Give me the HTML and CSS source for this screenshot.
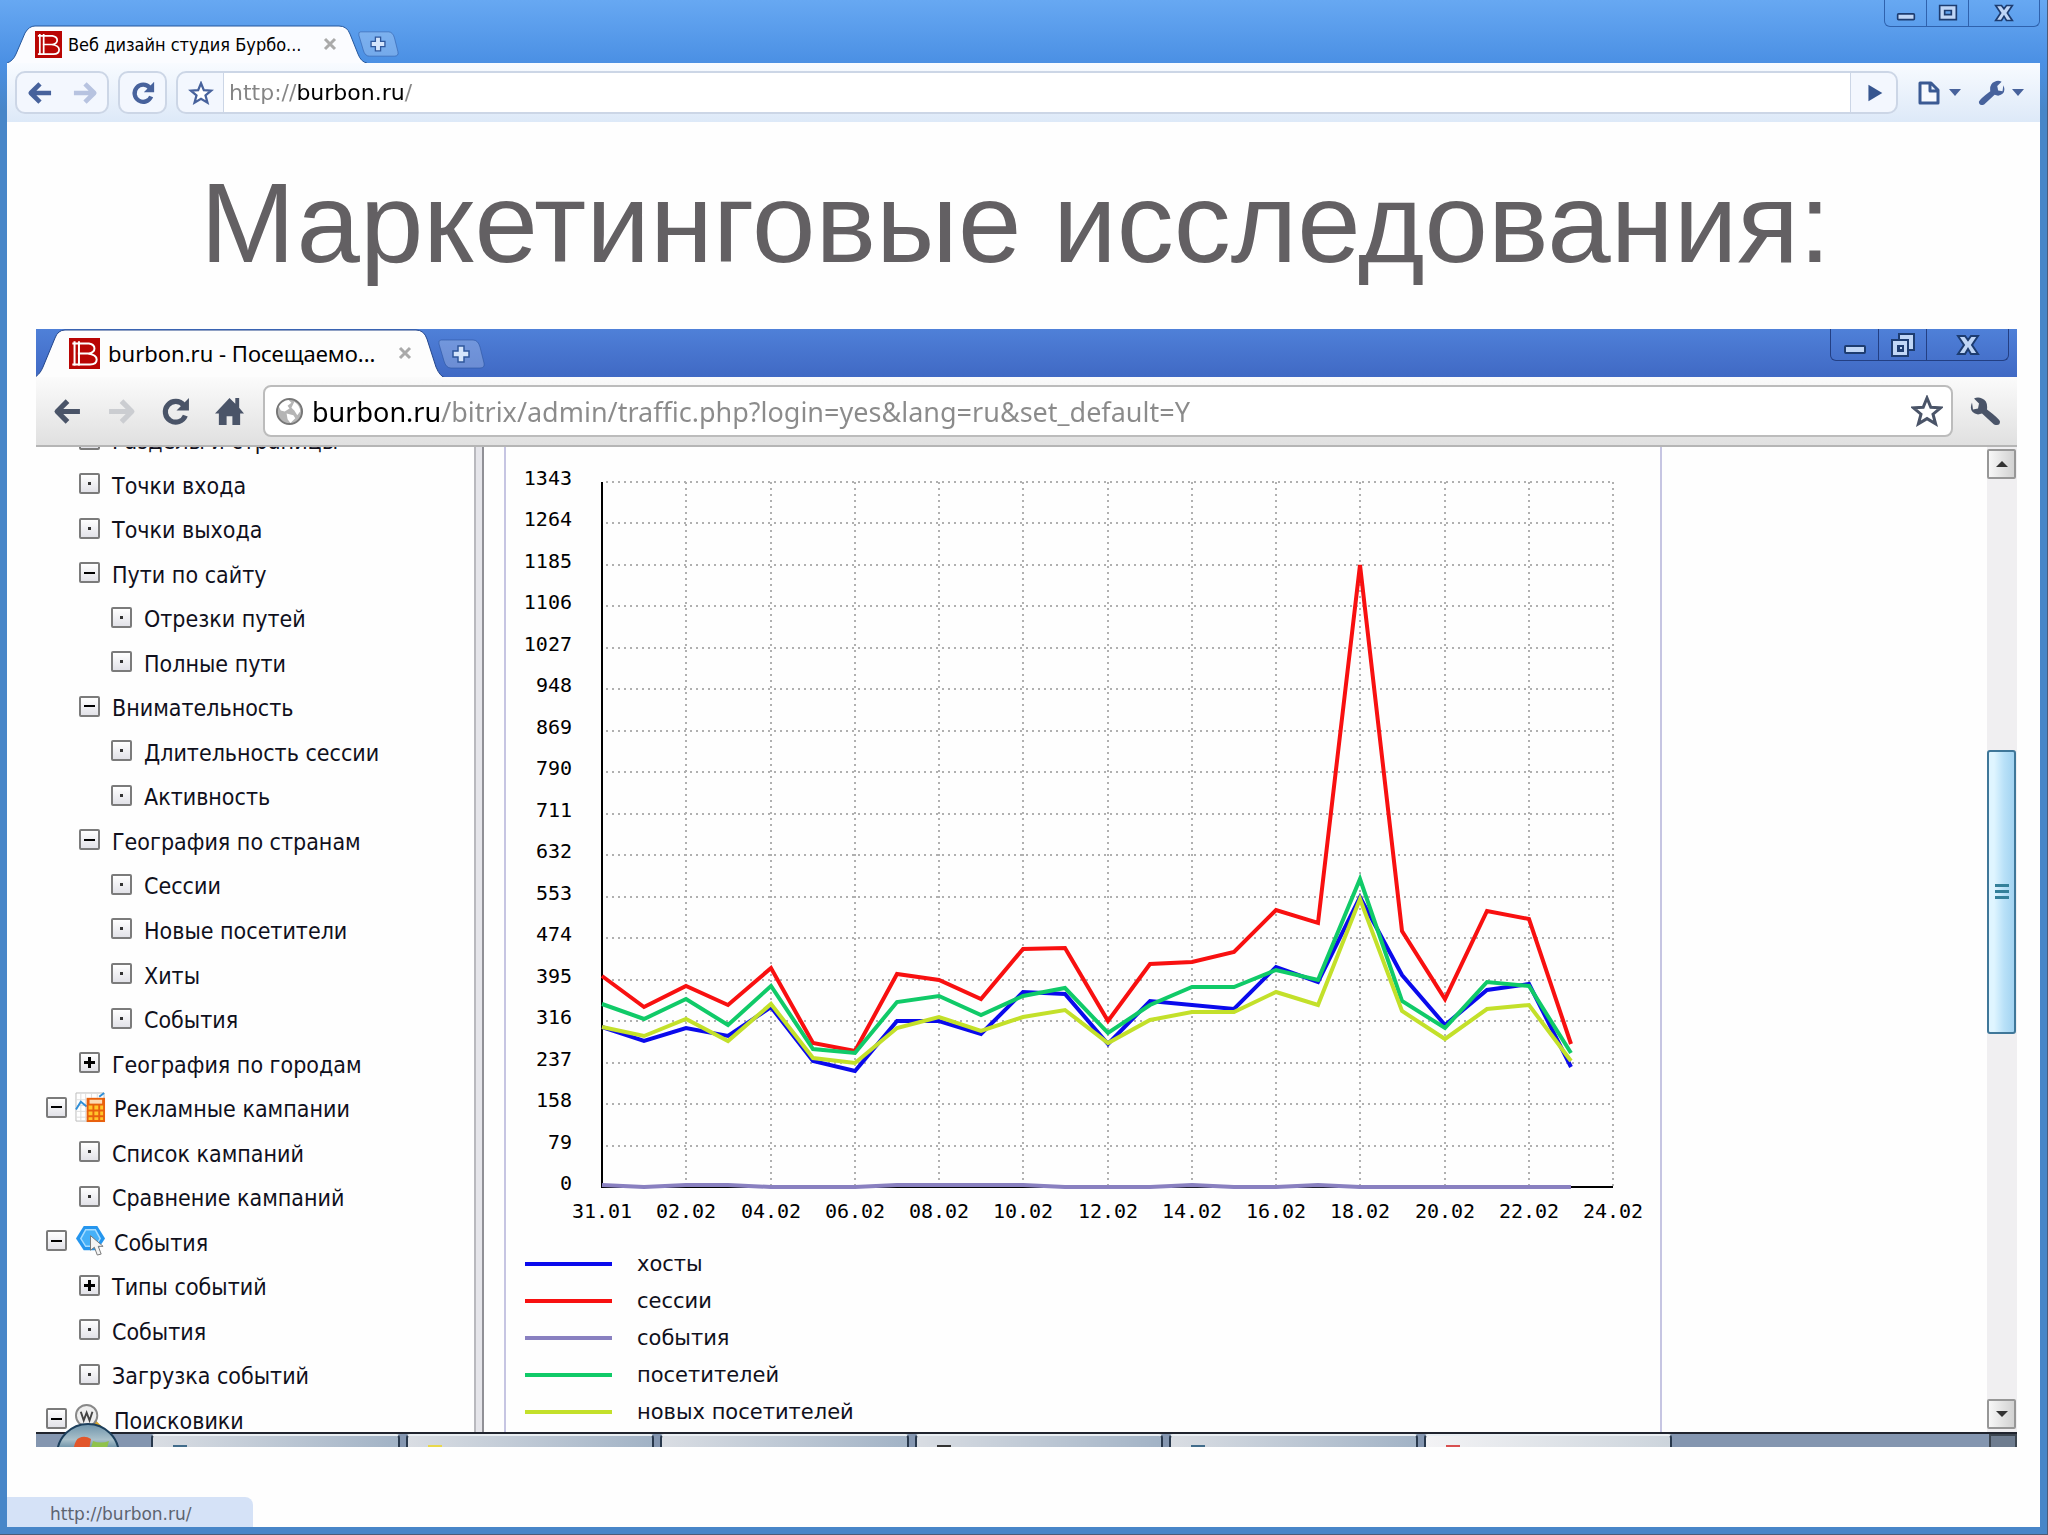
FILE: index.html
```html
<!DOCTYPE html>
<html lang="ru">
<head>
  <meta charset="UTF-8" />
  <meta name="viewport" content="width=device-width, initial-scale=1.0"/>
  <title>Веб дизайн студия Бурбон</title>
  <link rel="stylesheet" href="styles.css">
</head>
<body>
  <!-- shared icons -->
  <svg class="sprite" aria-hidden="true">
    <symbol id="logo" viewBox="0 0 28 28">
      <rect width="28" height="28" fill="#b90504"/>
      <path d="M5 3v22M9 3v22M3 5h15q5 1 5 4.500t-5 4.500H8M17 14q8 1 8 5.500T19 24H3" fill="none" stroke="#fff" stroke-width="1.800"/>
    </symbol>
    <symbol id="arrow" viewBox="0 0 28 26">
      <path d="M26 13H5M14 3L4 13l10 10" fill="none" stroke="currentColor" stroke-width="5" stroke-linejoin="round"/>
    </symbol>
    <symbol id="reload" viewBox="0 0 28 28">
      <path d="M22 8a10 10 0 1 0 1.500 10" fill="none" stroke="currentColor" stroke-width="5"/>
      <path d="M27 1v12H15z" fill="currentColor"/>
    </symbol>
    <symbol id="star" viewBox="0 0 32 32">
      <path d="M16 3l3.800 9.200 9.700.6-7.500 6.400 2.600 9.600L16 23.600l-8.600 5.200L10 19.200 2.500 12.800l9.700-.6z" fill="#fff" stroke="currentColor" stroke-width="3"/>
    </symbol>
    <symbol id="wrench" viewBox="0 0 32 28">
      <path d="M3 5q-4 10 6 12l4-1 12 11q6 2 6-3-1-3-13-12 1-9-5-11-4-2-8 0l5 5-1 5-5 1z" fill="currentColor"/>
    </symbol>
    <symbol id="cross" viewBox="0 0 14 14">
      <path d="M2 2l10 10M12 2L2 12" stroke="#aaa" stroke-width="3"/>
    </symbol>
    <symbol id="newtab" viewBox="0 0 48 30">
      <path d="M4 1h32q5 0 7 7l4 16q1 5-4 5H14q-5 0-7-7L2 5Q1 1 4 1z" fill="#fff" fill-opacity=".22" stroke="#2b55a0" stroke-opacity=".6"/>
      <path d="M21 7h6v5h5v6h-5v5h-6v-5h-5v-6h5z" fill="#d5e5fb" stroke="#2f579c" stroke-width="1.500"/>
    </symbol>
    <symbol id="win-min" viewBox="0 0 24 26">
      <rect x="2" y="14" width="20" height="7" rx="1" fill="#c0d6f6" stroke="#1d3c70" stroke-width="2"/>
    </symbol>
    <symbol id="win-max" viewBox="0 0 24 26">
      <path d="M2 4h20v17H2zM8 10v5h8v-5z" fill="#c0d6f6" fill-rule="evenodd" stroke="#1d3c70" stroke-width="2"/>
    </symbol>
    <symbol id="win-restore" viewBox="0 0 24 26">
      <path d="M8 2h15v16H8z" fill="#c0d6f6" stroke="#1d3c70" stroke-width="2"/>
      <path d="M1 8h16v16H1zM7 14v5h5v-5z" fill="#c0d6f6" fill-rule="evenodd" stroke="#1d3c70" stroke-width="2"/>
    </symbol>
    <symbol id="win-close" viewBox="0 0 24 26">
      <path d="M2 4h7l3 4 3-4h7l-6 9 6 9h-7l-3-5-3 5H2l6-9z" fill="#c0d6f6" stroke="#1d3c70" stroke-width="2"/>
    </symbol>
  </svg>

  <div class="browser">
    <header class="tabstrip">
      <div class="tab">
        <svg class="tab-shape" viewBox="0 0 356 38" preserveAspectRatio="none" aria-hidden="true">
          <path d="M0 38Q6 36 9 29L18 8Q22 1 28 1H332Q340 1 343 9L351 29Q354 37 360 38" fill="#fbfcff" stroke="#25579d" stroke-width="1"/>
        </svg>
        <div class="tab-label">
          <svg class="favicon" aria-hidden="true"><use href="#logo"/></svg>
          <span class="tab-title">Веб дизайн студия Бурбо...</span>
          <button class="close" aria-label="Закрыть вкладку"><svg><use href="#cross"/></svg></button>
        </div>
      </div>
      <button class="newtab" aria-label="Новая вкладка"><svg><use href="#newtab"/></svg></button>
      <div class="win-buttons">
        <button aria-label="Свернуть"><svg><use href="#win-min"/></svg></button>
        <button aria-label="Развернуть"><svg><use href="#win-max"/></svg></button>
        <button class="wide" aria-label="Закрыть"><svg><use href="#win-close"/></svg></button>
      </div>
    </header>

    <div class="toolbar">
      <div class="group">
        <button aria-label="Назад"><svg><use href="#arrow"/></svg></button>
        <button class="forward" aria-label="Вперёд"><svg><use href="#arrow"/></svg></button>
      </div>
      <div class="group">
        <button aria-label="Обновить"><svg><use href="#reload"/></svg></button>
      </div>
      <div class="group address">
        <button aria-label="В закладки"><svg><use href="#star"/></svg></button>
        <input class="url" type="text" value="http://burbon.ru/" aria-label="Адрес">
        <button aria-label="Перейти"><svg viewBox="0 0 26 26"><path d="M7 4l15 9L7 22z" fill="#36558f"/></svg></button>
      </div>
      <button class="menu" aria-label="Страница">
        <svg viewBox="0 0 26 26"><path d="M4 3h11l7 7v13H4zM14 3v8h8" fill="#f7faff" stroke="#3b5a93" stroke-width="3" stroke-linejoin="round"/></svg>
        <span class="caret"></span>
      </button>
      <button class="menu" aria-label="Настройки">
        <svg class="flip"><use href="#wrench"/></svg>
        <span class="caret"></span>
      </button>
    </div>

    <main class="page">
      <h1>Маркетинговые исследования:</h1>

      <section class="inner">
        <header class="tabstrip">
          <div class="tab">
            <svg class="tab-shape" viewBox="0 0 407 48" preserveAspectRatio="none" aria-hidden="true">
              <path d="M-4 50Q4 46 7 38L19 9Q22 1 29 1H380Q388 1 391 10L400 38Q404 48 410 49" fill="#fdfdfd" stroke="#24468c" stroke-width="1"/>
            </svg>
            <div class="tab-label">
              <svg class="favicon" aria-hidden="true"><use href="#logo"/></svg>
              <span class="tab-title">burbon.ru - Посещаемо...</span>
              <button class="close" aria-label="Закрыть вкладку"><svg><use href="#cross"/></svg></button>
            </div>
          </div>
          <button class="newtab" aria-label="Новая вкладка"><svg><use href="#newtab"/></svg></button>
          <div class="win-buttons">
            <button aria-label="Свернуть"><svg><use href="#win-min"/></svg></button>
            <button aria-label="Восстановить"><svg><use href="#win-restore"/></svg></button>
            <button class="wide" aria-label="Закрыть"><svg><use href="#win-close"/></svg></button>
          </div>
        </header>

        <div class="toolbar">
          <button aria-label="Назад"><svg><use href="#arrow"/></svg></button>
          <button class="forward" aria-label="Вперёд"><svg><use href="#arrow"/></svg></button>
          <button aria-label="Обновить"><svg><use href="#reload"/></svg></button>
          <button aria-label="Домой"><svg viewBox="0 0 30 30"><path d="M15 1l6 6V1h4v10l5 6h-4v12h-8v-9h-6v9H4V17H0z" fill="currentColor"/></svg></button>
          <div class="address">
            <svg class="globe" viewBox="0 0 30 30" aria-hidden="true">
              <circle cx="15" cy="15" r="13" fill="#b5b5b5" stroke="#777" stroke-width="2"/>
              <path d="M4 10q3-6 10-7l3 3-4 3 2 3-5 3-4-1zM12 17l7 2 2 3-5 5-3-4zM20 5q6 4 6 10l-3 4-3-5-3-3z" fill="#fff"/>
            </svg>
            <input class="url" type="text" value="burbon.ru/bitrix/admin/traffic.php?login=yes&amp;lang=ru&amp;set_default=Y" aria-label="Адрес">
            <button aria-label="В закладки"><svg><use href="#star"/></svg></button>
          </div>
          <button class="settings" aria-label="Настройки"><svg><use href="#wrench"/></svg></button>
        </div>

        <div class="panes">
          <nav class="sidebar">
            <ul class="tree">
              <li class="l1"><button class="toggle" aria-label="Раздел"></button><a href="#">Разделы и страницы</a></li>
              <li class="l1"><button class="toggle" aria-label="Раздел"></button><a href="#">Точки входа</a></li>
              <li class="l1"><button class="toggle" aria-label="Раздел"></button><a href="#">Точки выхода</a></li>
              <li class="l1"><button class="toggle minus" aria-label="Свернуть"></button><a href="#">Пути по сайту</a></li>
              <li class="l2"><button class="toggle" aria-label="Раздел"></button><a href="#">Отрезки путей</a></li>
              <li class="l2"><button class="toggle" aria-label="Раздел"></button><a href="#">Полные пути</a></li>
              <li class="l1"><button class="toggle minus" aria-label="Свернуть"></button><a href="#">Внимательность</a></li>
              <li class="l2"><button class="toggle" aria-label="Раздел"></button><a href="#">Длительность сессии</a></li>
              <li class="l2"><button class="toggle" aria-label="Раздел"></button><a href="#">Активность</a></li>
              <li class="l1"><button class="toggle minus" aria-label="Свернуть"></button><a href="#">География по странам</a></li>
              <li class="l2"><button class="toggle" aria-label="Раздел"></button><a href="#">Сессии</a></li>
              <li class="l2"><button class="toggle" aria-label="Раздел"></button><a href="#">Новые посетители</a></li>
              <li class="l2"><button class="toggle" aria-label="Раздел"></button><a href="#">Хиты</a></li>
              <li class="l2"><button class="toggle" aria-label="Раздел"></button><a href="#">События</a></li>
              <li class="l1"><button class="toggle plus" aria-label="Развернуть"></button><a href="#">География по городам</a></li>
              <li class="l0">
                <button class="toggle minus" aria-label="Свернуть"></button>
                <svg viewBox="0 0 32 32" aria-hidden="true">
                  <path d="M1 1h29v29H1z" fill="#fff" stroke="#bbb"/>
                  <path d="M6 1v29M11 1v29M17 1v5M23 1v5M1 8h11M1 14h11M1 20h11M1 26h11" stroke="#ddd"/>
                  <path d="M1 18l5-8 6 5M25 5l5-4" fill="none" stroke="#2f8fd8" stroke-width="2"/>
                  <rect x="12" y="6" width="19" height="25" fill="#e8600d"/>
                  <rect x="15" y="8" width="13" height="4" fill="#fbd9b4"/>
                  <path d="M14 14h4v4h-4zM20 14h4v4h-4zM26 14h3v4h-3zM14 20h4v4h-4zM20 20h4v4h-4zM26 20h3v4h-3zM14 26h4v3h-4zM20 26h4v3h-4zM26 26h3v3h-3z" fill="#ffc62b"/>
                </svg>
                <a href="#">Рекламные кампании</a>
              </li>
              <li class="l1"><button class="toggle" aria-label="Раздел"></button><a href="#">Список кампаний</a></li>
              <li class="l1"><button class="toggle" aria-label="Раздел"></button><a href="#">Сравнение кампаний</a></li>
              <li class="l0">
                <button class="toggle minus" aria-label="Свернуть"></button>
                <svg viewBox="0 0 32 32" aria-hidden="true">
                  <path d="M9 1h14l8 13-8 12H9L1 14z" fill="#2596ee"/>
                  <path d="M11 5h10l5 9-5 8H11L6 14z" fill="#45b0f8" stroke="#a6dcff" stroke-width="1.500"/>
                  <path d="M16 11v15l4-3 3 8 4-1-3-8h5z" fill="#f4f4f4" stroke="#777"/>
                </svg>
                <a href="#">События</a>
              </li>
              <li class="l1"><button class="toggle plus" aria-label="Развернуть"></button><a href="#">Типы событий</a></li>
              <li class="l1"><button class="toggle" aria-label="Раздел"></button><a href="#">События</a></li>
              <li class="l1"><button class="toggle" aria-label="Раздел"></button><a href="#">Загрузка событий</a></li>
              <li class="l0">
                <button class="toggle minus" aria-label="Свернуть"></button>
                <svg viewBox="0 0 32 32" aria-hidden="true">
                  <path d="M19 19l8 8" stroke="#d7a52c" stroke-width="5"/>
                  <circle cx="12" cy="13" r="11" fill="#eee" stroke="#888" stroke-width="2"/>
                  <path d="M6 9l3 9 3-8 3 8 3-9" fill="none" stroke="#444" stroke-width="2"/>
                </svg>
                <a href="#">Поисковики</a>
              </li>
            </ul>
          </nav>

          <div class="splitter"></div>

          <div class="content">
            <div class="report">
              <svg class="chart" id="chart" viewBox="0 0 1154 798" role="img" aria-label="График посещаемости"></svg>
              <ul class="legend">
                <li><span class="line hosts"></span>хосты</li>
                <li><span class="line sessions"></span>сессии</li>
                <li><span class="line events"></span>события</li>
                <li><span class="line visitors"></span>посетителей</li>
                <li><span class="line newbies"></span>новых посетителей</li>
              </ul>
            </div>
          </div>

          <div class="scrollbar">
            <button aria-label="Вверх"><svg viewBox="0 0 12 8"><path d="M0 7l6-6 6 6z" fill="#333"/></svg></button>
            <div class="track-top"></div>
            <div class="thumb"><span></span><span></span><span></span></div>
            <div class="track-bottom"></div>
            <button aria-label="Вниз"><svg viewBox="0 0 12 8"><path d="M0 1l6 6 6-6z" fill="#333"/></svg></button>
          </div>
        </div>

        <footer class="taskbar">
          <button class="start" aria-label="Пуск">
            <svg viewBox="0 0 64 64">
              <defs>
                <linearGradient id="orb" x1="0" y1="0" x2="0" y2="1">
                  <stop offset="0" stop-color="#6d93aa"/>
                  <stop offset=".25" stop-color="#a9c0ca"/>
                  <stop offset=".5" stop-color="#3d6c8c"/>
                </linearGradient>
              </defs>
              <circle cx="32" cy="32" r="31" fill="url(#orb)" stroke="#1c3f5c" stroke-width="2"/>
              <path d="M17 32q1-15 6-17 6-3 12 1l-3 16z" fill="#e2562a"/>
              <path d="M37 18q8 3 16 0l-4 14H33z" fill="#8fc24b"/>
            </svg>
          </button>
          <div class="tasks">
            <button aria-label="Окно 1"><span class="task-blue"></span></button>
            <button aria-label="Окно 2"><span class="task-yellow"></span></button>
            <button aria-label="Окно 3"></button>
            <button aria-label="Окно 4"><span class="task-dark"></span></button>
            <button aria-label="Окно 5"><span class="task-blue"></span></button>
            <button class="active" aria-label="Окно 6"><span class="task-red"></span></button>
          </div>
          <button class="desktop" aria-label="Рабочий стол"></button>
        </footer>
      </section>

      <div class="status">http://burbon.ru/</div>
    </main>
  </div>

  <script src="chart.js"></script>
</body>
</html>
```
FILE: styles.css
```css
* {
  box-sizing: border-box;
}
body {
  margin: 0;
  height: 100vh;
  font-family: 'DejaVu Sans Condensed', 'DejaVu Sans', sans-serif;
  background: #4886c8;
  color: #000;
}
button {
  display: flex;
  align-items: center;
  justify-content: center;
  padding: 0;
  border: 0;
  background: none;
  color: inherit;
  font: inherit;
}
ul {
  margin: 0;
  padding: 0;
  list-style: none;
}
.sprite {
  display: none;
}

/* outer browser */
.browser {
  height: 100%;
  display: flex;
  flex-direction: column;
  padding: 0 7px 7px;
  border: 1px solid #4c5c77;
  border-width: 0 1px 1px 0;
  background: linear-gradient(to bottom, #67a8f2, #4b90e4 62px, #4886c8 110px);
}
.tabstrip {
  display: flex;
  align-items: flex-end;
  height: 63px;
  flex-shrink: 0;
}
.tab {
  display: grid;
  width: 356px;
  height: 38px;
}
.tab > * {
  grid-area: 1 / 1;
}
.tab-shape {
  width: 100%;
  height: 38px;
  overflow: visible;
}
.tab-label {
  display: flex;
  align-items: center;
  padding: 2px 26px 2px 28px;
  font-size: 18px;
}
.favicon {
  width: 27px;
  height: 27px;
  margin-right: 6px;
}
.tab-title {
  flex: 1;
  white-space: nowrap;
}
.close svg {
  display: block;
  width: 14px;
  height: 14px;
}
.newtab {
  align-self: flex-end;
  margin-left: -6px;
  margin-bottom: 6px;
}
.newtab svg {
  display: block;
  width: 42px;
  height: 26px;
}
.win-buttons {
  display: flex;
  align-self: flex-start;
  margin-left: auto;
  border: 1px solid #2f62ad;
  border-top: 0;
  border-radius: 0 0 6px 6px;
}
.win-buttons button {
  width: 42px;
  height: 26px;
  border-right: 1px solid #2f62ad;
}
.win-buttons .wide {
  width: 70px;
  border-right: 0;
}
.win-buttons svg {
  width: 20px;
  height: 22px;
}
.toolbar {
  display: flex;
  align-items: center;
  gap: 9px;
  height: 59px;
  flex-shrink: 0;
  padding: 0 16px 0 8px;
  color: #47629c;
  background: linear-gradient(to bottom, #f8fbff, #dde9f8);
}
.group {
  display: flex;
  height: 43px;
  border: 2px solid #ccd6e6;
  border-radius: 10px;
  background: #f3f7fe;
  overflow: hidden;
}
.group button {
  width: 45px;
}
.group svg {
  width: 26px;
  height: 24px;
}
.forward {
  color: #b7c3e0;
}
.forward svg {
  transform: scaleX(-1);
}
.address {
  flex: 1;
}
.url {
  flex: 1;
  min-width: 0;
  padding: 0 0 0 5px;
  border: 1px solid #ccd6e6;
  border-width: 0 1px;
  font: 22px 'DejaVu Sans', sans-serif;
  color: #000;
  background: #fff;
}
.menu {
  gap: 6px;
  margin-left: 8px;
}
.menu svg {
  width: 28px;
  height: 26px;
}
.menu .flip {
  transform: scaleX(-1);
}
.caret {
  border: 6px solid transparent;
  border-top: 7px solid #47629c;
  border-bottom: 0;
}

/* slide */
.page {
  position: relative;
  flex: 1;
  min-height: 0;
  display: flex;
  flex-direction: column;
  padding: 0 23px 80px 29px;
  background: #fefefe;
}
h1 {
  margin: 0;
  padding: 40px 22px 45px 0;
  font: 114px/122px 'Liberation Sans', Arial, sans-serif;
  text-align: center;
  white-space: nowrap;
  color: #636063;
}
.status {
  position: absolute;
  left: 0;
  bottom: 0;
  width: 246px;
  padding: 6px 0 2px 43px;
  border-radius: 0 8px 0 0;
  font: 17px/22px 'DejaVu Sans', sans-serif;
  color: #5d6470;
  background: #d5e2f7;
}

/* inner browser */
.inner {
  flex: 1;
  min-height: 0;
  display: flex;
  flex-direction: column;
  overflow: hidden;
  background: #fefefe;
}
.inner .tabstrip {
  height: 48px;
  background: linear-gradient(to bottom, #4f80d8, #4069c4);
}
.inner .tab {
  width: 407px;
  height: 48px;
}
.inner .tab-shape {
  height: 48px;
}
.inner .tab-label {
  padding: 0 31px 0 33px;
  font: 22px 'Noto Sans', sans-serif;
}
.inner .favicon {
  width: 31px;
  height: 31px;
  margin-right: 8px;
}
.inner .newtab {
  margin-bottom: 8px;
}
.inner .newtab svg {
  width: 48px;
  height: 30px;
}
.inner .win-buttons {
  margin-right: 8px;
  border-color: #233f83;
}
.inner .win-buttons button {
  width: 48px;
  height: 31px;
  border-color: #233f83;
}
.inner .win-buttons .wide {
  width: 81px;
}
.inner .win-buttons svg {
  width: 24px;
  height: 26px;
}
.inner .toolbar {
  gap: 25px;
  height: 70px;
  padding: 0 16px 0 17px;
  border-bottom: 2px solid #b5b5b5;
  color: #4a5468;
  background: linear-gradient(to bottom, #fbfbfb, #e0e0e0);
}
.inner .toolbar svg {
  width: 29px;
  height: 29px;
}
.inner .toolbar .forward {
  color: #cbcdd1;
}
.inner .address {
  display: flex;
  align-items: center;
  height: 52px;
  margin-left: -6px;
  padding: 0 8px 0 10px;
  border: 2px solid #bcbcbc;
  border-radius: 8px;
  background: #fff;
}
.inner .url {
  padding: 0 0 0 8px;
  border: 0;
  font: 27px 'Noto Sans', sans-serif;
}
.inner .address button svg {
  width: 32px;
  height: 32px;
}
.inner .settings {
  margin-left: -9px;
}
.inner .settings svg {
  width: 32px;
}

/* first part of each address is coloured apart from the rest */
.toolbar .url {
  -webkit-text-fill-color: transparent;
  background: linear-gradient(to right, #858585 73px, #000 73px, #000 181px, #858585 181px);
  -webkit-background-clip: text;
  background-clip: text;
}
.inner .toolbar .url {
  background: linear-gradient(to right, #000 138px, #8b8b8b 138px);
  -webkit-background-clip: text;
  background-clip: text;
}
.group.address {
  background: linear-gradient(to right, #f3f7fe 46px, #fff 46px, #fff calc(100% - 46px), #f3f7fe calc(100% - 46px));
}

.panes {
  flex: 1;
  min-height: 0;
  display: flex;
  overflow: hidden;
}
.sidebar {
  width: 438px;
  display: flex;
  flex-direction: column;
  overflow: hidden;
}
.tree {
  flex: 1;
  display: grid;
  grid-auto-rows: 1fr;
  margin: -30px 0 -9px;
}
.tree li {
  display: flex;
  align-items: center;
  gap: 12px;
}
.tree .l0 {
  padding-left: 10px;
  gap: 8px;
}
.tree .l1 {
  padding-left: 43px;
}
.tree .l2 {
  padding-left: 75px;
}
.tree svg {
  width: 31px;
  height: 31px;
}
.tree a {
  font-size: 23px;
  line-height: 28px;
  padding-top: 4px;
  color: #10101c;
  text-decoration: none;
  white-space: nowrap;
}
.toggle {
  width: 21px;
  height: 21px;
  flex-shrink: 0;
  border: 2px solid #7b7b7b;
  border-radius: 2px;
  background: linear-gradient(to bottom, #fff, #e2e2e8);
}
.toggle::before {
  content: '';
  width: 3px;
  height: 3px;
  background: #333;
}
.toggle.minus::before {
  width: 11px;
  height: 2px;
  background: #000;
}
.toggle.plus::before {
  width: 11px;
  height: 11px;
  background:
    linear-gradient(#000, #000) center / 11px 3px no-repeat,
    linear-gradient(#000, #000) center / 3px 11px no-repeat;
}
.splitter {
  width: 10px;
  border-left: 2px solid #b9b9be;
  border-right: 2px solid #909096;
  background: #e5e5ea;
}
.content {
  flex: 1;
  min-width: 0;
  padding-left: 20px;
}
.report {
  width: 1158px;
  height: 100%;
  border: 2px solid #c6c5e2;
  border-width: 0 2px;
}
.chart {
  display: block;
  width: 100%;
}
.chart text {
  font: 20px 'DejaVu Sans Mono', monospace;
}
.chart polyline {
  fill: none;
  stroke-width: 4;
}
.chart .grid {
  stroke: #b0b0b0;
  stroke-width: 2;
  stroke-dasharray: 2 4;
}
.chart .axis {
  fill: none;
  stroke: #000;
  stroke-width: 2;
}
.hosts {
  stroke: #0a0aec;
  background: #0a0aec;
}
.sessions {
  stroke: #f81010;
  background: #f81010;
}
.events {
  stroke: #8980c0;
  background: #8980c0;
}
.visitors {
  stroke: #10ca68;
  background: #10ca68;
}
.newbies {
  stroke: #c3e02a;
  background: #c3e02a;
}
.legend li {
  display: flex;
  align-items: center;
  gap: 25px;
  height: 37px;
  padding-left: 19px;
  font: 21px 'DejaVu Sans', sans-serif;
  color: #10101c;
}
.line {
  width: 87px;
  height: 4px;
}
.scrollbar {
  display: flex;
  flex-direction: column;
  width: 30px;
  padding: 2px 1px 3px 0;
  background: #f0eff1;
}
.scrollbar button {
  height: 30px;
  border: 2px solid #979797;
  border-radius: 2px;
  background: linear-gradient(to right, #f7f7f7, #d2d2d2);
}
.scrollbar svg {
  width: 12px;
  height: 8px;
}
.track-top {
  flex: 272;
}
.thumb {
  flex: 281;
  display: flex;
  flex-direction: column;
  align-items: center;
  justify-content: center;
  gap: 3px;
  border: 2px solid #3f7799;
  border-radius: 3px;
  background: linear-gradient(to right, #dff5ff 20%, #b9e1f8 60%, #a2d3f1);
}
.thumb span {
  width: 14px;
  height: 3px;
  background: #34809a;
}
.track-bottom {
  flex: 367;
}

/* taskbar */
.taskbar {
  position: relative;
  display: flex;
  justify-content: space-between;
  height: 15px;
  padding-left: 115px;
  border-top: 2px solid #20242e;
  background: #8496b0;
}
.start {
  position: absolute;
  left: 20px;
  top: -11px;
}
.start svg {
  display: block;
  width: 64px;
  height: 64px;
}
.tasks {
  display: flex;
  gap: 6px;
  width: 1521px;
}
.tasks button {
  flex: 1;
  align-items: flex-end;
  justify-content: flex-start;
  padding-left: 20px;
  border: 2px solid #28384c;
  border-top-color: #e9eef2;
  border-bottom: 0;
  border-radius: 4px 4px 0 0;
  background: linear-gradient(to right, #d9dde3, #a2b3c6);
}
.tasks .active {
  background: linear-gradient(to right, #f3f3f5, #ccd4dc);
}
.tasks span {
  width: 14px;
  height: 2px;
}
.task-blue {
  background: #416c8b;
}
.task-yellow {
  background: #e8d84c;
}
.task-dark {
  background: #333;
}
.task-red {
  background: #d85050;
}
.desktop {
  width: 28px;
  border: 2px solid #3d4650;
  border-bottom: 0;
  background: #6f7d90;
}
```
FILE: chart.js
```js
const series = {
  hosts: [304, 279, 302, 287, 342, 240, 221, 316, 316, 291, 371, 368, 272, 354, 347, 340, 420, 391, 553, 403, 308, 375, 387, 229],
  sessions: [402, 343, 383, 347, 417, 275, 259, 405, 395, 358, 454, 456, 317, 425, 429, 448, 527, 503, 1184, 487, 359, 525, 510, 272],
  events: [3, 0, 3, 3, 0, 0, 0, 3, 3, 3, 3, 0, 0, 0, 3, 0, 0, 3, 0, 0, 0, 0, 0, 0],
  visitors: [349, 320, 358, 309, 383, 262, 255, 353, 364, 327, 364, 379, 294, 346, 381, 381, 414, 394, 587, 354, 303, 390, 382, 255],
  newbies: [304, 287, 320, 279, 349, 246, 236, 302, 323, 298, 324, 338, 274, 318, 333, 333, 372, 347, 548, 335, 282, 340, 347, 240]
};
const dates = ['31.01', '02.02', '04.02', '06.02', '08.02', '10.02', '12.02', '14.02', '16.02', '18.02', '20.02', '22.02', '24.02'];

const left = 96, right = 1107, top_ = 35, bottom = 740;
const max = 1343, step = 79;
const x = day => Math.round(left + day * (right - left) / 24);
const y = value => Math.round(bottom - value * (bottom - top_) / max);

let out = '';

// horizontal grid and values
for (let v = 0; v <= max; v += step) {
  if (v > 0) out += `<line class="grid" x1="${left + 4}" y1="${y(v)}" x2="${right}" y2="${y(v)}"/>`;
  out += `<text x="${left - 30}" y="${y(v) + 3}" text-anchor="end">${v}</text>`;
}

// vertical grid and dates
dates.forEach((date, i) => {
  if (i > 0) out += `<line class="grid" x1="${x(i * 2)}" y1="${top_}" x2="${x(i * 2)}" y2="${bottom}"/>`;
  out += `<text x="${x(i * 2)}" y="${bottom + 31}" text-anchor="middle">${date}</text>`;
});

out += `<path class="axis" d="M${left} ${top_}V${bottom}H${right}"/>`;

Object.entries(series).forEach(([name, values]) => {
  const points = values.map((v, i) => `${x(i)},${y(v)}`).join(' ');
  out += `<polyline class="${name}" points="${points}"/>`;
});

document.getElementById('chart').innerHTML = out;
```
